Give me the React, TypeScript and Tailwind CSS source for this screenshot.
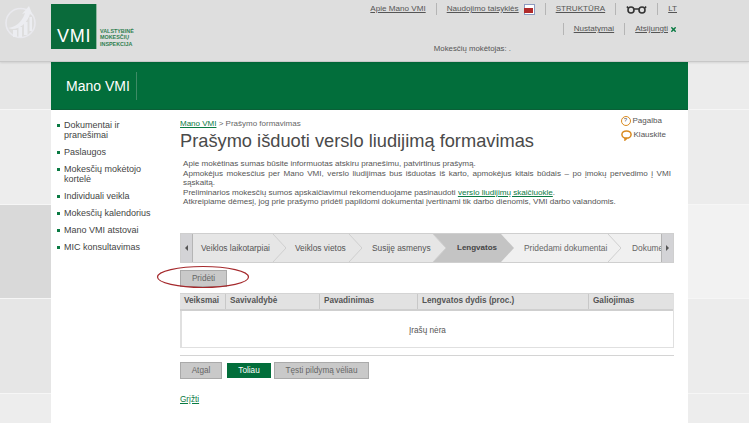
import { X } from "lucide-react"

const menu = [
  "Dokumentai ir pranešimai",
  "Paslaugos",
  "Mokesčių mokėtojo kortelė",
  "Individuali veikla",
  "Mokesčių kalendorius",
  "Mano VMI atstovai",
  "MIC konsultavimas",
]

const steps = [
  { label: "Veiklos laikotarpiai", w: "w-[80px] pl-[8px]", state: "done" },
  { label: "Veiklos vietos", w: "w-[76px] pl-[22px]", state: "done" },
  { label: "Susiję asmenys", w: "w-[84px] pl-[23px]", state: "done" },
  { label: "Lengvatos", w: "w-[68px] pl-[24px]", state: "active" },
  { label: "Pridedami dokumentai", w: "w-[107px] pl-[23px]", state: "todo" },
  { label: "Dokumentai", w: "w-[70px] pl-[24px]", state: "todo" },
]

const fills: Record<string, string> = { done: "#e6e6e6", active: "#c4c4c4", todo: "#f0f0f0" }

const columns = [
  { label: "Veiksmai", w: "w-[46px]" },
  { label: "Savivaldybė", w: "w-[94px]" },
  { label: "Pavadinimas", w: "w-[98px]" },
  { label: "Lengvatos dydis (proc.)", w: "w-[171px]" },
  { label: "Galiojimas", w: "flex-1" },
]

function Sep({ className = "h-[12px]" }: { className?: string }) {
  return <span className={`w-px bg-[#b5b5b5] ${className}`} />
}

function Band({ className }: { className: string }) {
  return <div className={`border-b border-[#f6f6f6] ${className}`} />
}

function Logo() {
  return (
    <div className="flex items-end">
      <div className="w-[46px] h-[45px] bg-[#0a6b3b] flex items-end pl-[6px] pb-[3px] border-r border-[#8fb8a0]">
        <span className="text-white text-[18px] leading-[20px] tracking-[0.8px]">VMI</span>
      </div>
      <div className="ml-[3px] mb-[2px] text-[#2f7f50] text-[5.4px] leading-[6.5px] font-bold">
        <div>VALSTYBINĖ</div>
        <div>MOKESČIŲ</div>
        <div>INSPEKCIJA</div>
      </div>
    </div>
  )
}

function Emblem() {
  return (
    <svg width="40" height="40" viewBox="0 0 40 40" className="absolute left-0 top-0" fill="none">
      <circle cx="20.5" cy="23" r="14.5" stroke="#e9e9ee" strokeWidth="1.6" />
      <path d="M8 28C16 27 22 22 25 13l-3 1 7-8 4 10-3-2c-3 9-10 15-18 15z" fill="#ecedf1" />
      <rect x="13" y="30" width="4" height="7" fill="#ecedf1" />
      <rect x="18.5" y="27" width="3.5" height="10" fill="#ecedf1" />
      <rect x="24" y="22" width="3.5" height="13" fill="#ecedf1" />
      <rect x="29.5" y="17" width="2.5" height="14" fill="#ecedf1" />
    </svg>
  )
}

function PdfIcon() {
  return (
    <span className="w-[11px] h-[11px] relative inline-block border border-[#8d9bc0] bg-white">
      <span className="absolute left-[-1px] right-[1px] bottom-[1px] h-[5px] bg-[#b02a2a]" />
    </span>
  )
}

function Glasses() {
  return (
    <svg width="21" height="9" viewBox="0 0 21 9" fill="none" stroke="#333" strokeWidth="1.6">
      <circle cx="5" cy="5" r="3" />
      <circle cx="16" cy="5" r="3" />
      <path d="M8 4h5M2 3 1 1.5M19 3l1-1.5" />
    </svg>
  )
}

function Bubble() {
  return (
    <svg width="11" height="11" viewBox="0 0 11 11" fill="none" stroke="#d98a1f" strokeWidth="1.5">
      <ellipse cx="5.5" cy="4.5" rx="4.6" ry="3.6" />
      <path d="M4 8v2l2-1.8" />
    </svg>
  )
}

function Arrow({ state }: { state: string }) {
  return (
    <svg width="13" height="28" viewBox="0 0 13 28" className="absolute right-[-13px] top-0 z-10">
      <path d="M0 0 13 14 0 28z" fill={fills[state]} />
      {state !== "active" && <path d="M0 0 13 14 0 28" fill="none" stroke="#cfcfcf" />}
    </svg>
  )
}

function Button({ children, className = "" }: { children: string; className?: string }) {
  return (
    <button className={`h-[17px] bg-[#c9c9c9] border border-[#aaaaaa] text-[#666] text-[8.2px] leading-[15px] ${className}`}>
      {children}
    </button>
  )
}

export default function App() {
  return (
    <div className="w-[749px] h-[423px] overflow-hidden relative font-['Liberation_Sans',Arial,sans-serif] text-[#444]">
      {/* Side bands */}
      <div className="absolute inset-0 flex">
        <div className="w-[51px] flex flex-col">
          <Band className="h-[110px] bg-[#e6e6e6]" />
          <Band className="h-[95px] bg-[#ededed]" />
          <Band className="h-[94px] bg-[#d9d9d9]" />
          <Band className="h-[95px] bg-[#e6e6e6]" />
          <div className="flex-1 bg-[#ededed]" />
        </div>
        <div className="w-[637px]" />
        <div className="flex-1 flex flex-col">
          <Band className="h-[110px] bg-[#ececec]" />
          <Band className="h-[95px] bg-[#ececec]" />
          <Band className="h-[94px] bg-[#f2f2f2]" />
          <Band className="h-[95px] bg-[#ececec]" />
          <div className="flex-1 bg-[#ededed]" />
        </div>
      </div>

      <div className="relative">
        {/* Header */}
        <header className="relative h-[62px] bg-[#dedede] border-b border-[#c8c8c8] shadow-[0_1px_2px_rgba(0,0,0,0.1)]">
          <Emblem />
          <div className="w-[637px] ml-[51px] h-full relative flex">
            <div className="pt-[4px]">
              <Logo />
            </div>
            <div className="flex-1 flex flex-col items-end pr-[11px] text-[8.1px] leading-[12px] text-[#555]">
              <div className="flex items-center gap-[10px] h-[18px]">
                <span className="underline">Apie Mano VMI</span>
                <Sep />
                <span className="flex items-center gap-[3px]">
                  <span className="underline pr-[2px]">Naudojimo taisyklės</span>
                  <PdfIcon />
                </span>
                <Sep />
                <span className="underline">STRUKTŪRA</span>
                <Sep />
                <Glasses />
                <Sep />
                <span className="underline">LT</span>
              </div>
              <div className="flex items-center gap-[10px] mt-[2px] h-[18px]">
                <Sep />
                <span className="underline">Nustatymai</span>
                <Sep />
                <span className="flex items-center gap-[2px]">
                  <span className="underline">Atsijungti</span>
                  <X size={7} strokeWidth={5} className="text-[#0a7a43]" />
                </span>
              </div>
              <div className="mt-[2px] h-[18px] flex items-center mr-[166px] text-[7.8px]">Mokesčių mokėtojas: .</div>
            </div>
          </div>
        </header>

        <div className="w-[637px] ml-[51px]">
          {/* Green bar */}
          <div className="h-[48px] bg-[#026e3b] border-b border-[#0a5f37] flex items-center pl-[15px]">
            <span className="text-white text-[14px] pr-[6px] h-[28px] leading-[28px] border-r border-[#3f8b66]">Mano VMI</span>
          </div>

          <div className="bg-white h-[313px] flex">
            {/* Left menu */}
            <nav className="w-[129px] shrink-0 pl-[6px] pt-[10px] text-[9px] leading-[10px] text-[#444]">
              <ul className="flex flex-col gap-[7px]">
                {menu.map((item) => (
                  <li key={item} className="flex">
                    <span className="w-[3px] h-[3px] bg-[#0a7a43] mt-[4px] mr-[4px] shrink-0" />
                    <span className="w-[88px]">{item}</span>
                  </li>
                ))}
              </ul>
            </nav>

            {/* Main column */}
            <main className="flex-1 min-w-0 relative pr-[14px]">
              <div className="pt-[9px] text-[8px] leading-[10px] text-[#666]">
                <span className="underline text-[#0a7a43]">Mano VMI</span> &gt; Prašymo formavimas
              </div>
              <h1 className="text-[18.25px] leading-[24px] text-[#4a4a4a] whitespace-nowrap">Prašymo išduoti verslo liudijimą formavimas</h1>

              <div className="absolute right-[22px] top-[4px] text-[8px] leading-[14px] text-[#555] flex flex-col">
                <span className="flex items-center gap-[2px]">
                  <span className="w-[10px] h-[10px] rounded-full border-[1.5px] border-[#d98a1f] text-[#555] text-[6px] leading-[7px] text-center">?</span>
                  Pagalba
                </span>
                <span className="flex items-center gap-[2px]">
                  <Bubble />
                  Klauskite
                </span>
              </div>

              <div className="pl-[3px] mt-[6px] text-[8.1px] leading-[9.6px] text-[#555]">
                <p>Apie mokėtinas sumas būsite informuotas atskiru pranešimu, patvirtinus prašymą.</p>
                <p className="[text-align:justify] w-[488px]">Apmokėjus mokesčius per Mano VMI, verslo liudijimas bus išduotas iš karto, apmokėjus kitais būdais – po įmokų pervedimo į VMI sąskaitą.</p>
                <p>
                  Preliminarios mokesčių sumos apskaičiavimui rekomenduojame pasinaudoti{" "}
                  <span className="underline text-[#0a7a43]">verslo liudijimų skaičiuokle</span>.
                </p>
                <p>Atkreipiame dėmesį, jog prie prašymo pridėti papildomi dokumentai įvertinami tik darbo dienomis, VMI darbo valandomis.</p>
              </div>

              {/* Wizard */}
              <div className="mt-[26px] h-[30px] border border-[#cfcfcf] flex relative overflow-hidden bg-[#f0f0f0]">
                <div className="w-[12px] shrink-0 bg-[#d3d3d6] border-r border-[#b5b5b5] flex items-center justify-center">
                  <span className="w-0 h-0 border-y-[3px] border-y-transparent border-r-[3px] border-r-[#555]" />
                </div>
                {steps.map((s) => (
                  <div
                    key={s.label}
                    className={`${s.w} shrink-0 relative flex items-center text-[8.4px] whitespace-nowrap ${
                      s.state === "active"
                        ? "bg-[#c4c4c4] font-bold text-[8px] text-[#444]"
                        : s.state === "done"
                          ? "bg-[#e6e6e6] text-[#555]"
                          : "bg-[#f0f0f0] text-[#666]"
                    }`}
                  >
                    {s.label}
                    <Arrow state={s.state} />
                  </div>
                ))}
                <div className="absolute right-0 top-0 bottom-0 w-[12px] bg-[#d3d3d6] border-l border-[#b5b5b5] flex items-center justify-center z-20">
                  <span className="w-0 h-0 border-y-[3px] border-y-transparent border-l-[3px] border-l-[#555]" />
                </div>
              </div>

              {/* Add button */}
              <div className="relative mt-[7px] h-[20px]">
                <Button className="block w-[47px]">Pridėti</Button>
                <svg width="94" height="24" viewBox="0 0 94 24" fill="none" className="absolute left-[-24px] top-[-5px]">
                  <ellipse cx="47" cy="12" rx="45.5" ry="10.5" stroke="#a5292c" strokeWidth="1.2" />
                </svg>
              </div>

              {/* Table */}
              <div className="mt-[3px] border-r border-b border-l-2 border-[#e0e0e0] h-[55px]">
                <div className="flex h-[18px] -ml-[2px] bg-[#e2e2e2] border-b-2 border-[#cfcfcf] border-t border-t-[#d4d4d4] text-[8.2px] font-bold text-[#555]">
                  {columns.map((c) => (
                    <div key={c.label} className={`${c.w} flex items-center pl-[4px] border-r border-[#c8c8c8] last:border-r-0 shrink-0 whitespace-nowrap`}>
                      {c.label}
                    </div>
                  ))}
                </div>
                <div className="text-center text-[8.2px] text-[#555] leading-[12px] mt-[14px]">Įrašų nėra</div>
              </div>

              <div className="h-px bg-[#d4d4d4] mt-[7px]" />

              {/* Footer buttons */}
              <div className="flex items-center mt-[6px]">
                <Button className="w-[42px]">Atgal</Button>
                <button className="ml-[5px] w-[44px] h-[15px] bg-[#026e3b] text-white text-[8.2px] leading-[15px]">Toliau</button>
                <Button className="ml-[3px] w-[95px]">Tęsti pildymą vėliau</Button>
              </div>

              <div className="mt-[15px] text-[8.2px] leading-[12px] underline text-[#0a7a43]">Grįžti</div>
            </main>
          </div>
        </div>
      </div>
    </div>
  )
}
